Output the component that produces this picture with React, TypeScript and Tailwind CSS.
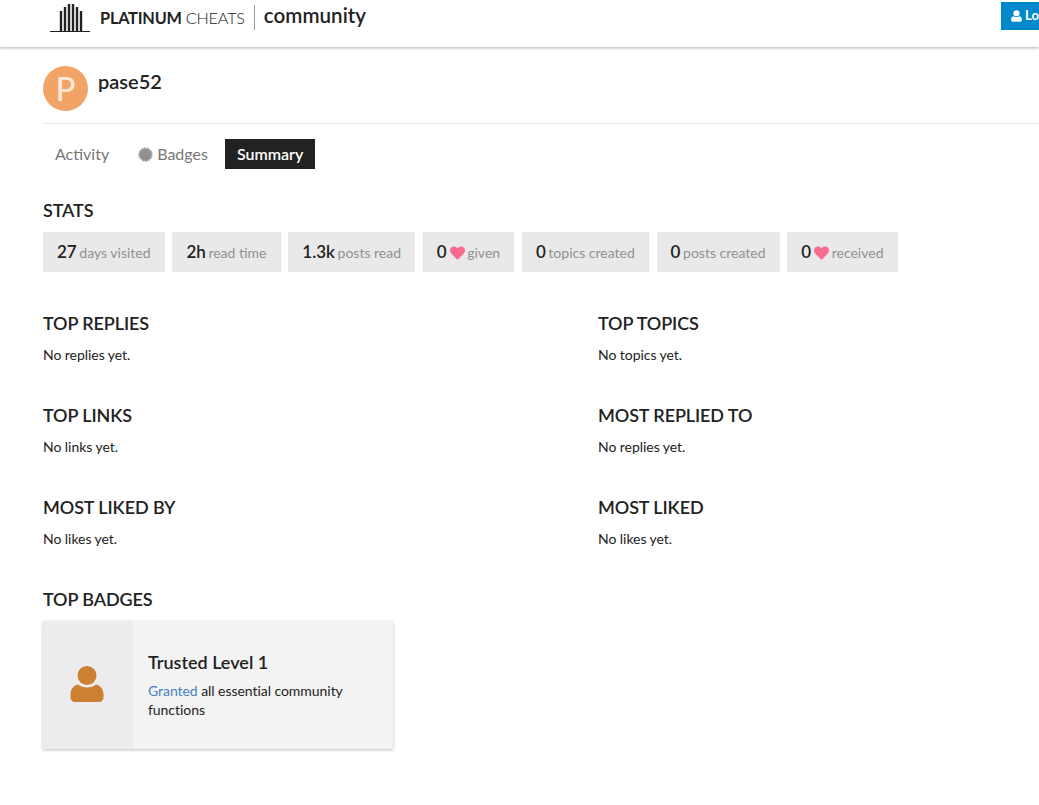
const stats = [
  { value: "27", label: "days visited" },
  { value: "2h", label: "read time" },
  { value: "1.3k", label: "posts read" },
  { value: "0", label: "given", heart: true },
  { value: "0", label: "topics created" },
  { value: "0", label: "posts created" },
  { value: "0", label: "received", heart: true },
]

const sections = [
  { title: "TOP REPLIES", empty: "No replies yet." },
  { title: "TOP TOPICS", empty: "No topics yet." },
  { title: "TOP LINKS", empty: "No links yet." },
  { title: "MOST REPLIED TO", empty: "No replies yet." },
  { title: "MOST LIKED BY", empty: "No likes yet." },
  { title: "MOST LIKED", empty: "No likes yet." },
]

function Heart() {
  return (
    <svg viewBox="0 0 512 512" className="w-[15px] h-[15px] fill-[#fa6c8d] inline-block">
      <path d="M462 79c-55-46-136-38-186 14l-20 20-20-20C186 41 105 33 50 79c-63 54-66 150-10 208l193 199c12 13 33 13 46 0l193-199c56-58 53-154-10-208z" />
    </svg>
  )
}

// same silhouette is used for the badge and the login button
function PersonIcon({ className }: { className: string }) {
  return (
    <svg viewBox="0 0 34 36" className={className}>
      <circle cx="17" cy="9.500" r="9.500" />
      <path d="M8 18.500c2.400 2 5.400 3 9 3s6.600-1 9-3c4 .8 7.500 4.500 7.500 9.500v3.500c0 2.500-2 4.500-4.500 4.500H5c-2.500 0-4.500-2-4.500-4.500V28c0-5 3.500-8.700 7.500-9.500z" />
    </svg>
  )
}

function Logo() {
  return (
    <svg viewBox="0 0 40 30" className="w-[40px] h-[30px] stroke-[#222222]" fill="none">
      <path d="M0 28.500h40" strokeWidth="1.200" />
      <path d="M11 28V8M15 28V4M19 28V1M23 28V1M27 28V4M31 28V8" strokeWidth="2.400" />
    </svg>
  )
}

export default function App() {
  return (
    <div className="w-[1039px] h-[805px] overflow-hidden bg-white text-[#222222] font-['Lato','Open_Sans',sans-serif]">
      <header className="h-[47px] flex justify-between shadow-[0_1px_3px_rgba(0,0,0,0.3)]">
        <div className="flex items-start pl-[50px] pt-[3px]">
          <Logo />
          <span className="ml-[10px] mt-[5px] text-[16.300px] leading-[20px] font-bold tracking-[-0.2px]">PLATINUM</span>
          <span className="ml-[4px] mt-[5px] text-[16.300px] leading-[20px] font-light tracking-[-0.2px]">CHEATS</span>
          <span className="ml-[9px] mt-[2px] w-px h-[25px] bg-[#999999]" />
          <span className="ml-[9px] mt-[-1px] text-[20.600px] leading-[26px] font-semibold">community</span>
        </div>
        <div className="w-[38px] h-[28px] mt-[2px] bg-[#0088cc] text-white text-[13px] font-bold flex items-center pl-[10px] overflow-hidden whitespace-nowrap">
          <PersonIcon className="w-[11px] h-[12px] shrink-0 mr-[3px] fill-white" />
          Log In
        </div>
      </header>

      <main className="pl-[43px]">
        <div className="h-[77px] flex items-start pt-[19px] border-b border-[#e9e9e9]">
          <div className="w-[45px] h-[45px] rounded-full bg-[#f1a465] text-[#fde8d7] text-[33px] font-medium flex items-center justify-center">
            P
          </div>
          <h1 className="ml-[10px] text-[20px] leading-[31px] font-semibold">pase52</h1>
        </div>

        <nav className="mt-[15px] flex items-center h-[30px] text-[16px]">
          <span className="ml-[12px] text-[#777777]">Activity</span>
          <span className="ml-[29px] flex items-center text-[#777777]">
            <svg viewBox="0 0 16 16" className="w-[15px] h-[15px] mr-[4px] fill-[#919191]">
              <circle cx="8" cy="8" r="6.800" />
              <circle cx="8" cy="8" r="7.200" fill="none" stroke="#919191" strokeWidth="1" strokeDasharray="2 1.200" />
            </svg>
            Badges
          </span>
          <span className="ml-[17px] h-[30px] px-[12px] flex items-center bg-[#222222] text-white font-semibold">Summary</span>
        </nav>

        <h2 className="mt-[29px] text-[18px] leading-[24px] font-semibold tracking-[-0.1px]">STATS</h2>
        <div className="mt-[10px] flex gap-[7.800px]">
          {stats.map((s) => (
            <div key={s.label} className="h-[40px] px-[14px] bg-[#e9e9e9] flex items-center whitespace-nowrap">
              <span className="text-[17px] font-semibold">{s.value}</span>
              {s.heart ? <span className="ml-[3px] flex items-center"><Heart /></span> : null}
              <span className={s.heart ? "ml-[2.500px] text-[14px] text-[#919191]" : "ml-[2.600px] text-[14px] text-[#919191]"}>{s.label}</span>
            </div>
          ))}
        </div>

        <div className="mt-[39px] grid grid-cols-[555px_1fr] gap-y-[40px]">
          {sections.map((s) => (
            <section key={s.title} className="h-[52px]">
              <h2 className="text-[18px] leading-[24px] font-semibold tracking-[-0.1px]">{s.title}</h2>
              <p className="mt-[11px] text-[14px] leading-[18px] tracking-[-0.05px]">{s.empty}</p>
            </section>
          ))}
        </div>

        <h2 className="mt-[40px] text-[18px] leading-[24px] font-semibold tracking-[-0.1px]">TOP BADGES</h2>
        <div className="mt-[10px] w-[350px] h-[128px] flex bg-[#f3f3f3] shadow-[0_1px_3px_rgba(0,0,0,0.25)]">
          <div className="w-[90px] bg-[#ececec] flex items-center justify-center pr-[2px] pb-[2px]">
            <PersonIcon className="w-[34px] h-[36px] fill-[#cd7f32]" />
          </div>
          <div className="flex-1 pl-[15px] pr-[30px] pt-[28px]">
            <h3 className="text-[18px] leading-[26px] font-semibold">Trusted Level 1</h3>
            <p className="mt-[6px] text-[14px] leading-[19px] tracking-[-0.05px]">
              <span className="text-[#4a7fc1]">Granted</span> all essential community functions
            </p>
          </div>
        </div>
      </main>
    </div>
  )
}
